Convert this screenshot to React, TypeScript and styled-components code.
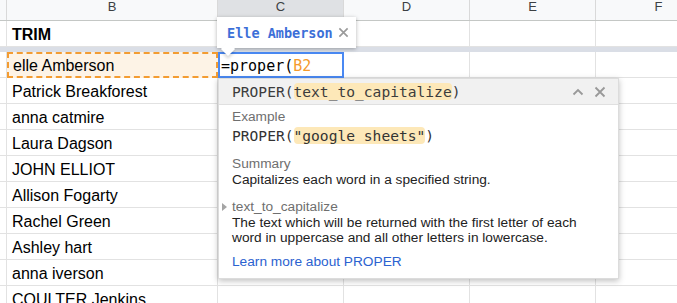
import React from 'react';
import styled, {createGlobalStyle} from 'styled-components';

const GlobalStyle = createGlobalStyle`
    html, body {
        margin: 0;
        padding: 0;
        background: #fff;
        overflow: hidden;
    }
`;

const COLS = [
    {key: '', w: 7},
    {key: 'B', w: 211},
    {key: 'C', w: 126},
    {key: 'D', w: 126},
    {key: 'E', w: 126},
    {key: 'F', w: 126},
];

const NAMES = [
    'Patrick Breakforest',
    'anna catmire',
    'Laura Dagson',
    'JOHN ELLIOT',
    'Allison Fogarty',
    'Rachel Green',
    'Ashley hart',
    'anna iverson',
    'COULTER Jenkins',
];

const SANS = `"Liberation Sans", Arial, sans-serif`;
const MONO = `"DejaVu Sans Mono", "Liberation Mono", monospace`;

function CloseIcon({size = 12, color = '#888'}: {size?: number; color?: string}) {
    return (
        <svg width={size} height={size} viewBox="0 0 12 12">
            <path d="M1.5 1.5 L10.5 10.5 M10.5 1.5 L1.5 10.5" stroke={color} strokeWidth="1.8" fill="none"/>
        </svg>
    );
}

function ChevronUp() {
    return (
        <svg width="12" height="12" viewBox="0 0 12 12">
            <path d="M1.5 8.5 L6 4 L10.5 8.5" stroke="#999" strokeWidth="1.8" fill="none"/>
        </svg>
    );
}

export default function App() {
    return (
        <>
            <GlobalStyle/>
            <Page>
                <HeaderRow>
                    {COLS.map((c) => (
                        <HeaderCell key={c.key || 'corner'} $w={c.w} $selected={c.key === 'C'}>
                            {c.key}
                        </HeaderCell>
                    ))}
                </HeaderRow>

                <Row>
                    {COLS.map((c, i) => (
                        <Cell key={i} $w={c.w} $bold>
                            {c.key === 'B' ? 'TRIM' : ''}
                        </Cell>
                    ))}
                </Row>

                <FrozenBar/>

                <Row>
                    {COLS.map((c, i) => {
                        if (c.key === 'B') return <CopyCell key={i} $w={c.w}>elle Amberson</CopyCell>;
                        if (c.key === 'C') return (
                            <ActiveCell key={i} $w={c.w}>
                                =proper(<RefText>B2</RefText>
                            </ActiveCell>
                        );
                        return <Cell key={i} $w={c.w}/>;
                    })}
                </Row>

                {NAMES.map((name) => (
                    <Row key={name}>
                        {COLS.map((c, i) => (
                            <Cell key={i} $w={c.w}>{c.key === 'B' ? name : ''}</Cell>
                        ))}
                    </Row>
                ))}

                <PreviewTip>
                    <PreviewText>Elle Amberson</PreviewText>
                    <CloseIcon size={11} color="#9a9a9a"/>
                </PreviewTip>

                <HelpBox>
                    <HelpHeader>
                        <Signature>PROPER(<Arg>text_to_capitalize</Arg>)</Signature>
                        <HeaderIcons>
                            <ChevronUp/>
                            <CloseIcon size={12} color="#999"/>
                        </HeaderIcons>
                    </HelpHeader>
                    <HelpBody>
                        <Label>Example</Label>
                        <Code>PROPER(<Arg>"google sheets"</Arg>)</Code>
                        <Label $gap={9}>Summary</Label>
                        <Desc>Capitalizes each word in a specified string.</Desc>
                        <ArgLabel $gap={12}>text_to_capitalize</ArgLabel>
                        <Desc>The text which will be returned with the first letter of each<br/>
                            word in uppercase and all other letters in lowercase.</Desc>
                        <LearnMore>Learn more about PROPER</LearnMore>
                    </HelpBody>
                </HelpBox>
            </Page>
        </>
    );
}

const Page = styled.div`
    position: relative;
    width: 677px;
    height: 303px;
    overflow: hidden;
    font-family: ${SANS};
`;

const HeaderRow = styled.div`
    display: flex;
    height: 21px;
    background: #f8f9fa;
    border-bottom: 1px solid #c4c7c5;
    box-sizing: border-box;
`;

const HeaderCell = styled.div<{ $w: number; $selected?: boolean }>`
    flex: 0 0 ${({$w}) => $w}px;
    box-sizing: border-box;
    border-right: 1px solid #d9d9d9;
    background: ${({$selected}) => ($selected ? '#dfe1e4' : 'transparent')};
    color: #3c4043;
    font-size: 13px;
    text-align: center;
    line-height: 13px;
`;

const Row = styled.div`
    display: flex;
    height: 26px;
`;

const Cell = styled.div<{ $w: number; $bold?: boolean }>`
    flex: 0 0 ${({$w}) => $w}px;
    min-width: 0;
    box-sizing: border-box;
    border-right: 1px solid #e2e2e2;
    border-bottom: 1px solid #e2e2e2;
    padding: 3px ${({$w}) => ($w < 20 ? 0 : 5)}px 0;
    display: flex;
    align-items: center;
    font-size: 16px;
    font-weight: ${({$bold}) => ($bold ? 700 : 400)};
    color: #000;
    white-space: nowrap;
    overflow: hidden;
`;

const CopyCell = styled(Cell)`
    border: 2px dashed #f39c32;
    background: #fdf3e6;
    padding: 2px 0 0 4px;
`;

const ActiveCell = styled(Cell)`
    border: 2px solid #4a89f3;
    padding: 1px 0 0 1px;
    font-family: ${MONO};
    font-size: 15px;
    position: relative;
    z-index: 1;
    background: #fff;
`;

const RefText = styled.span`
    color: #f59a2c;
`;

const FrozenBar = styled.div`
    height: 5px;
    background: #dadee6;
`;

const PreviewTip = styled.div`
    position: absolute;
    left: 217px;
    top: 17px;
    width: 139px;
    height: 31px;
    box-sizing: border-box;
    padding: 0 7px 0 10px;
    display: flex;
    align-items: center;
    justify-content: space-between;
    background: #fff;
    box-shadow: 0 1px 4px rgba(0, 0, 0, 0.3);
    z-index: 2;

    &::after {
        content: '';
        position: absolute;
        left: 6px;
        bottom: -6px;
        width: 10px;
        height: 10px;
        background: #fff;
        transform: rotate(45deg);
        box-shadow: 2px 2px 3px rgba(0, 0, 0, 0.15);
    }
`;

const PreviewText = styled.span`
    font-family: ${MONO};
    font-weight: 700;
    font-size: 13.5px;
    color: #3c6fd8;
`;

const HelpBox = styled.div`
    position: absolute;
    left: 218px;
    top: 78px;
    width: 401px;
    height: 201px;
    background: #fff;
    border: 1px solid #dcdcdc;
    box-sizing: border-box;
    box-shadow: 0 2px 6px rgba(0, 0, 0, 0.25);
    z-index: 3;
`;

const HelpHeader = styled.div`
    height: 25px;
    background: #f1f1f1;
    border-bottom: 1px solid #e0e0e0;
    display: flex;
    align-items: center;
    justify-content: space-between;
    padding: 0 12px 0 13px;
`;

const Signature = styled.div`
    font-family: ${MONO};
    font-size: 14.6px;
    color: #3c3c3c;
`;

const Arg = styled.span`
    background: #fde8b8;
    border-radius: 4px;
`;

const HeaderIcons = styled.div`
    display: flex;
    gap: 10px;
    align-items: center;
`;

const HelpBody = styled.div`
    padding: 4px 13px 0;
    display: flex;
    flex-direction: column;
`;

const Label = styled.div<{ $gap?: number }>`
    font-size: 13.7px;
    color: #6f6f6f;
    line-height: 16px;
    margin-top: ${({$gap}) => $gap ?? 0}px;
`;

const ArgLabel = styled(Label)`
    position: relative;

    &::before {
        content: '';
        position: absolute;
        left: -10px;
        top: 4px;
        border-left: 5px solid #a5a5a5;
        border-top: 4px solid transparent;
        border-bottom: 4px solid transparent;
    }
`;

const Code = styled.div`
    font-family: ${MONO};
    font-size: 14.6px;
    color: #333;
    line-height: 22px;
`;

const Desc = styled.div`
    font-size: 13.7px;
    color: #222;
    line-height: 15px;
`;

const LearnMore = styled.div`
    margin-top: 9px;
    font-size: 13.7px;
    color: #2b62d0;
    line-height: 16px;
`;
